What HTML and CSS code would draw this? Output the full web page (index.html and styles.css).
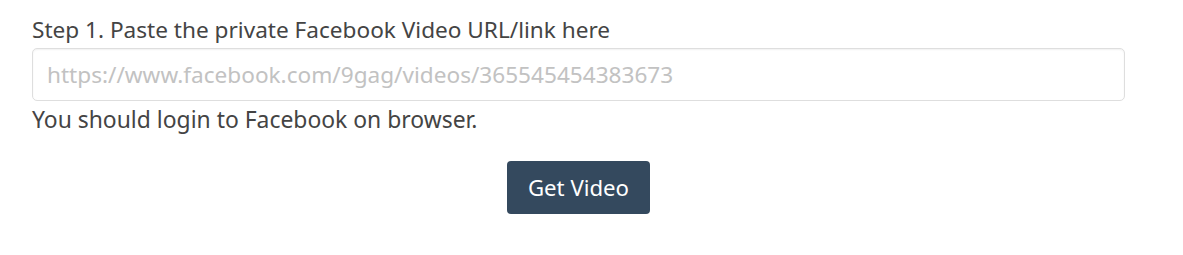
FILE: index.html
```html
<!DOCTYPE html>
<html>
<head>
<meta charset="utf-8">
<link rel="stylesheet" href="styles.css">
</head>
<body>
<div class="form">
  <label class="step-label" for="url">Step 1. Paste the private Facebook Video URL/link here</label>
  <input id="url" class="url-input" type="text" placeholder="https://www.facebook.com/9gag/videos/365545454383673">
  <p class="hint">You should login to Facebook on browser.</p>
  <div class="actions">
    <button class="btn-get">Get Video</button>
  </div>
</div>
</body>
</html>
```

FILE: styles.css
```css
html, body {
  margin: 0;
  padding: 0;
  background: #fff;
}
body {
  font-family: "Noto Sans", "Open Sans", sans-serif;
  font-size: 22.6px;
  color: #444;
}
.form {
  width: 1093px;
  margin-left: 32px;
  padding-top: 15px;
}
.step-label {
  display: block;
  line-height: 30px;
  margin-bottom: 3px;
}
.url-input {
  display: block;
  box-sizing: border-box;
  width: 100%;
  height: 53px;
  padding: 0 14px;
  border: 1px solid #dedede;
  border-radius: 5px;
  box-shadow: inset 0 1px 2px rgba(0,0,0,0.06);
  font-family: inherit;
  font-size: 22.6px;
  color: #555;
  outline: none;
}
.url-input::placeholder {
  color: #c2c2c2;
}
.hint {
  margin: 4px 0 0;
  line-height: 30px;
  font-size: 22.9px;
}
.actions {
  display: flex;
  justify-content: center;
  margin-top: 26px;
}
.btn-get {
  width: 143px;
  height: 53px;
  border: none;
  border-radius: 4px;
  background: #34495e;
  color: #fff;
  font-family: inherit;
  font-size: 22.2px;
  padding: 0;
}
```
